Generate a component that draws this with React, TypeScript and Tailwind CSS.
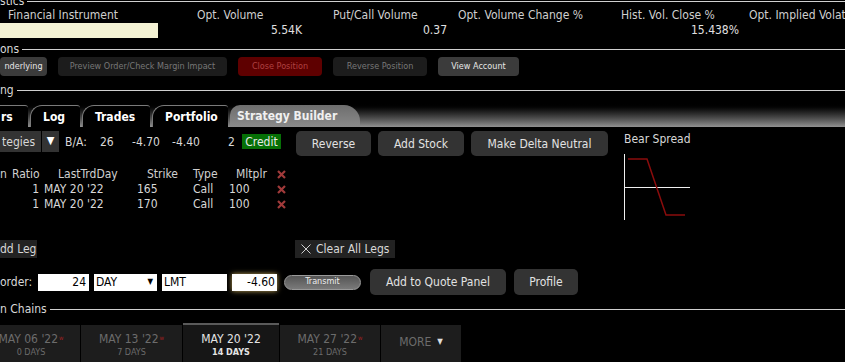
import { ReactNode } from 'react';

const font = "font-['DejaVu_Sans_Condensed','DejaVu_Sans',sans-serif]";

const Legend = ({ label, className = '' }: { label: string; className?: string }) => (
  <div className={`flex items-center h-[14px] ${className}`}>
    <span className="text-[12px] text-[#d8d8d8] leading-none">{label}</span>
    <div className="flex-1 h-px bg-[#d0d0d0] ml-[3px]" />
  </div>
);

const SmallBtn = ({ children, tone = 'dark', w }: { children: ReactNode; tone?: 'dark' | 'light' | 'red'; w: string }) => {
  const tones = {
    dark: 'bg-[#1c1c1c] text-[#777]',
    light: 'bg-[#3b3b3b] text-[#e6e6e6]',
    red: 'bg-[#5e0000] text-[#b04040]',
  };
  return (
    <div className={`h-[19px] ${w} rounded-[4px] flex items-center justify-center text-[9px] ${tones[tone]}`}>
      {children}
    </div>
  );
};

const Btn = ({ children, w, h = 'h-[25px]' }: { children: ReactNode; w: string; h?: string }) => (
  <div className={`${h} ${w} rounded-[5px] bg-[#333] flex items-center justify-center text-[12px] text-[#e2e2e2]`}>
    {children}
  </div>
);

const RedX = () => (
  <svg width="9" height="9" viewBox="0 0 9 9">
    <path d="M1 1L8 8M8 1L1 8" stroke="#a03a3a" strokeWidth="2.2" />
  </svg>
);

const BlackTab = ({ label, w }: { label: string; w: string }) => (
  <div className={`${w} h-[22px] shrink-0 bg-black border-t border-l border-[#7a7a7a] rounded-tl-[12px] rounded-tr-[3px] flex items-center pl-[12px] text-[12px] font-bold text-white`}>
    {label}
  </div>
);

const DateTab = ({ date, days, active, w, shift = '' }: { date: string; days: string; active?: boolean; w: string; shift?: string }) => (
  <div
    className={`${w} shrink-0 h-[40px] flex flex-col items-center pt-[7px] ${
      active ? 'bg-[#161616] border-t-2 border-[#5a5a5a] text-[#e4e4e4]' : 'bg-[#1d1d1d] text-[#6c6c6c] mt-[2px]'
    } ${shift}`}
  >
    <div className="text-[12px] leading-[14px] whitespace-nowrap">
      {date}
      {!active && <sup className="text-[6px] text-[#a02020] ml-px">w</sup>}
    </div>
    <div className={`text-[9px] leading-[12px] ${active ? 'font-bold' : ''}`}>{days}</div>
  </div>
);

export default function App() {
  return (
    <div className={`w-[845px] h-[362px] bg-black overflow-hidden text-[#d8d8d8] ${font}`}>
      {/* statistics */}
      <Legend label="stics" className="-mt-[6px]" />
      <div className="flex h-[14px] items-center text-[12px] text-[#cfcfcf] whitespace-nowrap">
        <div className="w-[175px] shrink-0 pl-[8px]">Financial Instrument</div>
        <div className="w-[130px] shrink-0 pl-[22px]">Opt. Volume</div>
        <div className="w-[145px] shrink-0 pl-[28px]">Put/Call Volume</div>
        <div className="w-[162px] shrink-0 pl-[8px]">Opt. Volume Change %</div>
        <div className="w-[130px] shrink-0 pl-[9px]">Hist. Vol. Close %</div>
        <div className="shrink-0 pl-[7px]">Opt. Implied Volatility</div>
      </div>
      <div className="flex h-[16px] items-center text-[12px] text-[#e0e0e0]">
        <div className="w-[175px] shrink-0">
          <div className="w-[158px] h-[15px] bg-[#f4f2d4]" />
        </div>
        <div className="w-[130px] shrink-0 text-right pr-[3px]">5.54K</div>
        <div className="w-[145px] shrink-0 text-right pr-[3px]">0.37</div>
        <div className="w-[162px] shrink-0" />
        <div className="w-[130px] shrink-0 text-right pr-[3px]">15.438%</div>
      </div>

      {/* actions */}
      <Legend label="ons" className="mt-[4px]" />
      <div className="flex gap-[11px] mt-px">
        <SmallBtn tone="light" w="w-[47px]">nderlying</SmallBtn>
        <SmallBtn w="w-[169px]">Preview Order/Check Margin Impact</SmallBtn>
        <SmallBtn tone="red" w="w-[84px]">Close Position</SmallBtn>
        <SmallBtn w="w-[94px]">Reverse Position</SmallBtn>
        <SmallBtn tone="light" w="w-[81px]">View Account</SmallBtn>
      </div>

      {/* trading */}
      <Legend label="ng" className="mt-[7px]" />
      <div className="h-[30px] bg-gradient-to-b from-black from-[20%] to-[#929292] flex items-end gap-[2px]">
        <BlackTab label="rs" w="w-[40px] -ml-[12px]" />
        <BlackTab label="Log" w="w-[50px]" />
        <BlackTab label="Trades" w="w-[68px]" />
        <BlackTab label="Portfolio" w="w-[76px]" />
        <div className="w-[130px] h-[22px] shrink-0 bg-gradient-to-b from-[#6e6e6e] to-[#8a8a8a] rounded-tl-[10px] rounded-tr-[16px] flex items-center pl-[7px] text-[12px] font-bold text-[#f0f0f0]">
          Strategy Builder
        </div>
      </div>

      <div className="flex mt-[4px]">
        <div className="w-[624px] shrink-0">
          {/* B/A row */}
          <div className="flex items-start h-[25px] text-[12px]">
            <div className="w-[41px] h-[21px] bg-[#333] flex items-center justify-end pr-[6px]">tegies</div>
            <div className="w-[17px] h-[21px] bg-[#333] ml-px flex items-center justify-center text-[11px] text-white">▼</div>
            <div className="flex items-center h-[21px] ml-[6px]">
              <span className="w-[35px]">B/A:</span>
              <span className="w-[32px]">26</span>
              <span className="w-[40px]">-4.70</span>
              <span className="w-[56px]">-4.40</span>
              <span className="w-[14px]">2</span>
              <span className="h-[15px] w-[39px] bg-[#067006] text-[#e8e8e8] flex items-center justify-center">Credit</span>
            </div>
            <div className="flex gap-[7px] ml-[15px]">
              <Btn w="w-[75px]">Reverse</Btn>
              <Btn w="w-[86px]">Add Stock</Btn>
              <Btn w="w-[137px]">Make Delta Neutral</Btn>
            </div>
          </div>

          {/* legs */}
          <div className="mt-[11px] text-[12px] leading-[15px]">
            <div className="flex items-center h-[15px] text-[#d0d0d0]">
              <span className="w-[12px]">n</span>
              <span className="w-[46px]">Ratio</span>
              <span className="w-[89px]">LastTrdDay</span>
              <span className="w-[46px]">Strike</span>
              <span className="w-[43px]">Type</span>
              <span className="w-[41px]">Mltplr</span>
              <RedX />
            </div>
            {['165', '170'].map((k) => (
              <div key={k} className="flex items-center h-[15px]">
                <span className="w-[39px] text-right">1</span>
                <span className="w-[98px] pl-[5px]">MAY 20 '22</span>
                <span className="w-[56px]">{k}</span>
                <span className="w-[36px]">Call</span>
                <span className="w-[48px]">100</span>
                <RedX />
              </div>
            ))}
          </div>

          <div className="flex items-center mt-[28px] text-[12px]">
            <div className="h-[18px] w-[37px] bg-[#222] flex items-center">dd Leg</div>
            <div className="h-[18px] w-[100px] bg-[#222] ml-[258px] flex items-center gap-[5px] pl-[6px]">
              <svg width="10" height="10" viewBox="0 0 10 10">
                <path d="M0.5 0.5L9.5 9.5M9.5 0.5L0.5 9.5" stroke="#cfcfcf" strokeWidth="1" />
              </svg>
              Clear All Legs
            </div>
          </div>

          {/* order row */}
          <div className="flex items-center mt-[11px] h-[26px] text-[12px]">
            <span className="w-[38px]">order:</span>
            <div className="w-[51px] h-[17px] bg-white text-black text-right pr-[3px] leading-[17px]">24</div>
            <div className="w-[63px] h-[17px] bg-white text-black ml-[5px] flex items-center justify-between pl-[2px] pr-[4px]">
              DAY<span className="text-[8px]">▼</span>
            </div>
            <div className="w-[65px] h-[17px] bg-white text-black ml-[5px] pl-[2px] leading-[17px]">LMT</div>
            <div className="w-[45px] h-[17px] bg-white text-black ml-[5px] text-right pr-[2px] leading-[17px] shadow-[0_0_5px_#bfa35a]">-4.60</div>
            <div className="w-[77px] h-[15px] ml-[7px] rounded-full border border-[#9a9a9a] bg-gradient-to-b from-[#555] to-[#7a7a7a] text-[9px] text-[#eee] flex items-center justify-center">
              Transmit
            </div>
            <div className="flex gap-[8px] ml-[9px]">
              <Btn w="w-[136px]" h="h-[26px]">Add to Quote Panel</Btn>
              <Btn w="w-[64px]" h="h-[26px]">Profile</Btn>
            </div>
          </div>
        </div>

        {/* payoff chart */}
        <div className="flex-1">
          <div className="h-[16px] text-[12px] leading-[16px]">Bear Spread</div>
          <svg width="70" height="70" viewBox="0 0 70 70" className="mt-[6px]">
            <path d="M0.5 1V67" stroke="#f0f0f0" strokeWidth="1" />
            <path d="M0 34.5H66" stroke="#f0f0f0" strokeWidth="1" />
            <path d="M4 6H23L42 62H61" stroke="#8a0c0c" strokeWidth="1.5" fill="none" />
          </svg>
        </div>
      </div>

      {/* option chains */}
      <Legend label="n Chains" className="mt-[7px]" />
      <div className="flex items-start gap-px mt-[7px]">
        <DateTab date="MAY 06 '22" days="0 DAYS" w="w-[98px]" shift="-ml-[18px]" />
        <DateTab date="MAY 13 '22" days="7 DAYS" w="w-[101px]" />
        <DateTab date="MAY 20 '22" days="14 DAYS" w="w-[96px]" active />
        <DateTab date="MAY 27 '22" days="21 DAYS" w="w-[100px]" />
        <div className="w-[80px] h-[40px] mt-[2px] bg-[#1d1d1d] text-[#6c6c6c] text-[12px] flex items-center justify-center pb-[6px]">
          MORE <span className="text-[8px] text-[#ddd] ml-[6px]">▼</span>
        </div>
      </div>
    </div>
  );
}
